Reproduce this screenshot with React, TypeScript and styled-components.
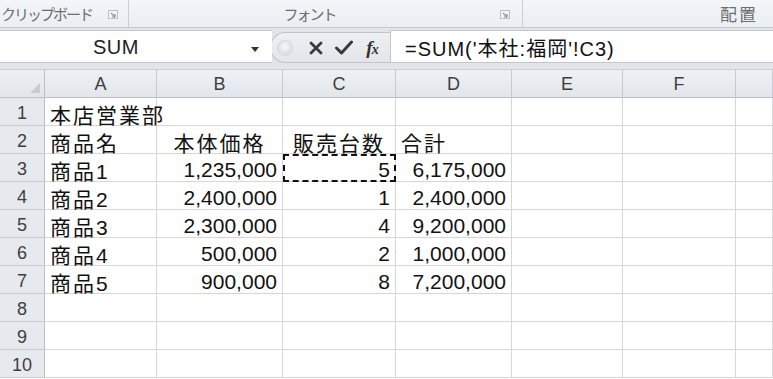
import React from "react";
import styled, { createGlobalStyle } from "styled-components";

const Global = createGlobalStyle`
  html, body { margin: 0; padding: 0; background: #ffffff; overflow: hidden; }
  #root { width: 773px; height: 379px; overflow: hidden; }
`;

const Page = styled.div`
  width: 773px;
  height: 379px;
  display: flex;
  flex-direction: column;
  background: #fff;
  font-family: "Liberation Sans", "Noto Sans CJK JP", sans-serif;
`;

const Ribbon = styled.div`
  height: 28px;
  flex: none;
  display: flex;
  background: linear-gradient(#f4f6f9, #eaedf2);
  border-bottom: 1px solid #c4c9d1;
  box-sizing: border-box;
`;

const Group = styled.div<{ $w?: number; $align: "left" | "center" | "right" }>`
  ${(p) => (p.$w ? `width: ${p.$w}px; flex: none;` : "flex: 1;")}
  display: flex;
  align-items: center;
  justify-content: ${(p) =>
    p.$align === "left" ? "flex-start" : p.$align === "center" ? "center" : "flex-end"};
  padding: ${(p) =>
    p.$align === "left" ? "0 0 0 1px" : p.$align === "center" ? "0" : "0 15px 0 0"};
  border-right: ${(p) => (p.$w ? "1px solid #c9ced5" : "none")};
  box-sizing: border-box;
  position: relative;
`;

const GroupLabel = styled.span<{ $shift?: number; $big?: boolean }>`
  font-family: "Noto Sans CJK JP", sans-serif;
  font-size: ${(p) => (p.$big ? "17px" : "15px")};
  color: #6b6e73;
  letter-spacing: ${(p) => (p.$big ? "2px" : "-2px")};
  margin-left: ${(p) => p.$shift ?? 0}px;
  white-space: nowrap;
  line-height: 20px;
`;

const Launcher = styled.svg<{ $right: number }>`
  position: absolute;
  right: ${(p) => p.$right}px;
  top: 10px;
`;

const LauncherIcon = ({ right }: { right: number }) => (
  <Launcher $right={right} width="10" height="9" viewBox="0 0 10 9">
    <rect x="0.5" y="0.5" width="9" height="8" fill="#f3f4f6" stroke="#bcc0c6" />
    <path d="M3 3 L7 7 M7 4 V7 H4" stroke="#8f939a" strokeWidth="1.2" fill="none" />
  </Launcher>
);

const FormulaRow = styled.div`
  height: 42px;
  flex: none;
  box-sizing: border-box;
  padding: 2px 0 6px 0;
  display: flex;
  background: #e1e5ea;
  border-bottom: 1px solid #c9ced5;
`;

const NameBox = styled.div`
  width: 272px;
  flex: none;
  background: #fff;
  border-top: 1px solid #c2c7cf;
  border-bottom: 1px solid #c2c7cf;
  display: flex;
  align-items: center;
  position: relative;
  box-sizing: border-box;
`;

const NameText = styled.span`
  font-family: "Liberation Sans", sans-serif;
  font-size: 20px;
  color: #222;
  margin-left: 93px;
  letter-spacing: 0.5px;
  padding-top: 2px;
`;

const DropArrow = styled.span`
  position: absolute;
  right: 13px;
  top: 16px;
  width: 0;
  height: 0;
  border-left: 4px solid transparent;
  border-right: 4px solid transparent;
  border-top: 5px solid #333;
`;

const Pill = styled.div`
  width: 120px;
  flex: none;
  margin-top: 2px;
  margin-left: -2px;
  background: linear-gradient(#eef0f3, #e2e5e9);
  border: 1px solid #bfc4cb;
  border-right: none;
  border-radius: 16px 0 0 16px;
  display: flex;
  align-items: center;
  box-sizing: border-box;
  padding-left: 6px;
`;

const Knob = styled.span`
  width: 14px;
  height: 14px;
  border-radius: 50%;
  background: radial-gradient(circle at 50% 40%, #f6f7f9, #cfd3d8);
  border: 1px solid #d6d9de;
  margin-right: 9px;
  flex: none;
`;

const IconSlot = styled.span<{ $w: number }>`
  width: ${(p) => p.$w}px;
  display: flex;
  align-items: center;
  justify-content: center;
  flex: none;
`;

const Fx = styled.span`
  font-family: "Liberation Serif", serif;
  font-style: italic;
  font-weight: bold;
  font-size: 19px;
  color: #333;
  letter-spacing: -1px;
`;

const FxSub = styled.span`
  font-size: 14px;
`;

const FormulaInput = styled.div`
  flex: 1;
  background: #fff;
  border: 1px solid #c2c7cf;
  border-right: none;
  display: flex;
  align-items: center;
  padding: 2px 0 0 14px;
  box-sizing: border-box;
  font-family: "Liberation Sans", "Noto Sans CJK JP", sans-serif;
  font-size: 20px;
  letter-spacing: 1px;
  color: #111;
`;

const Grid = styled.div`
  display: grid;
  grid-template-columns: 45px 112px 126px 113px 116px 111px 113px 1fr;
  grid-auto-rows: 28px;
  flex: none;
`;

const CornerCell = styled.div`
  background: linear-gradient(#eceff3, #e2e6eb);
  border-right: 1px solid #b9bfc7;
  border-bottom: 1px solid #b9bfc7;
  box-sizing: border-box;
  position: relative;
`;

const CornerTri = styled.span`
  position: absolute;
  right: 4px;
  bottom: 4px;
  width: 0;
  height: 0;
  border-left: 10px solid transparent;
  border-bottom: 10px solid #c8ccd2;
`;

const ColHead = styled.div`
  background: linear-gradient(#eef1f4, #e2e6eb);
  border-right: 1px solid #c5cad1;
  border-bottom: 1px solid #b9bfc7;
  box-sizing: border-box;
  display: flex;
  align-items: center;
  justify-content: center;
  font-family: "Liberation Sans", sans-serif;
  font-size: 18px;
  color: #3e3e3e;
  padding-top: 2px;
`;

const RowHead = styled.div`
  background: #e6e9ee;
  border-right: 1px solid #b9bfc7;
  border-bottom: 1px solid #c8cdd4;
  box-sizing: border-box;
  display: flex;
  align-items: center;
  justify-content: center;
  font-family: "Liberation Sans", sans-serif;
  font-size: 18px;
  color: #3e3e3e;
  padding-top: 3px;
`;

type Align = "left" | "center" | "right";

const Cell = styled.div<{ $align?: Align; $text?: boolean; $marquee?: boolean }>`
  border-right: 1px solid #d6d6d6;
  border-bottom: 1px solid #d6d6d6;
  box-sizing: border-box;
  display: flex;
  align-items: center;
  justify-content: ${(p) =>
    p.$align === "right" ? "flex-end" : p.$align === "center" ? "center" : "flex-start"};
  padding: 4px ${(p) => (p.$align === "right" ? "5px" : "0")} 0
    ${(p) => (p.$align === "left" ? "5px" : "0")};
  font-size: 21px;
  letter-spacing: ${(p) => (p.$text ? "2px" : "0")};
  color: #111;
  white-space: nowrap;
  overflow: visible;
  position: relative;
  ${(p) => (p.$marquee ? `outline: 2px dashed #111; outline-offset: -2px;` : "")}
`;

const cols = ["A", "B", "C", "D", "E", "F", ""];

type CellData = { v: string; a?: Align };
const L = (v: string): CellData => ({ v, a: "left" });
const C = (v: string): CellData => ({ v, a: "center" });
const R = (v: string): CellData => ({ v, a: "right" });
const E: CellData = { v: "" };

const data: CellData[][] = [
  [L("本店営業部"), E, E, E],
  [L("商品名"), C("本体価格"), C("販売台数"), L("合計")],
  [L("商品1"), R("1,235,000"), R("5"), R("6,175,000")],
  [L("商品2"), R("2,400,000"), R("1"), R("2,400,000")],
  [L("商品3"), R("2,300,000"), R("4"), R("9,200,000")],
  [L("商品4"), R("500,000"), R("2"), R("1,000,000")],
  [L("商品5"), R("900,000"), R("8"), R("7,200,000")],
  [E, E, E, E],
  [E, E, E, E],
  [E, E, E, E],
];

export default function App() {
  return (
    <>
      <Global />
      <Page>
        <Ribbon>
          <Group $w={129} $align="left">
            <GroupLabel>クリップボード</GroupLabel>
            <LauncherIcon right={10} />
          </Group>
          <Group $w={394} $align="center">
            <GroupLabel $shift={-32}>フォント</GroupLabel>
            <LauncherIcon right={12} />
          </Group>
          <Group $align="right">
            <GroupLabel $big>配置</GroupLabel>
          </Group>
        </Ribbon>
        <FormulaRow>
          <NameBox>
            <NameText>SUM</NameText>
            <DropArrow />
          </NameBox>
          <Pill>
            <Knob />
            <IconSlot $w={28}>
              <svg width="14" height="14" viewBox="0 0 14 14">
                <path d="M2 2 L12 12 M12 2 L2 12" stroke="#3a3a3a" strokeWidth="2.8" strokeLinecap="round" />
              </svg>
            </IconSlot>
            <IconSlot $w={28}>
              <svg width="18" height="15" viewBox="0 0 18 15">
                <path d="M1.5 8 L6.5 13 L16.5 2" stroke="#3a3a3a" strokeWidth="3" fill="none" strokeLinejoin="round" strokeLinecap="round" />
              </svg>
            </IconSlot>
            <IconSlot $w={28}>
              <Fx>
                f<FxSub>x</FxSub>
              </Fx>
            </IconSlot>
          </Pill>
          <FormulaInput>=SUM('本社:福岡'!C3)</FormulaInput>
        </FormulaRow>
        <Grid>
          <CornerCell>
            <CornerTri />
          </CornerCell>
          {cols.map((c, i) => (
            <ColHead key={"h" + i}>{c}</ColHead>
          ))}
          {data.map((row, r) => (
            <React.Fragment key={"r" + r}>
              <RowHead>{r + 1}</RowHead>
              {row.map((d, c) => (
                <Cell
                  key={c}
                  $align={d.a}
                  $text={d.a !== "right"}
                  $marquee={r === 2 && c === 2}
                >
                  {d.v}
                </Cell>
              ))}
              <Cell />
              <Cell />
              <Cell />
            </React.Fragment>
          ))}
        </Grid>
      </Page>
    </>
  );
}
